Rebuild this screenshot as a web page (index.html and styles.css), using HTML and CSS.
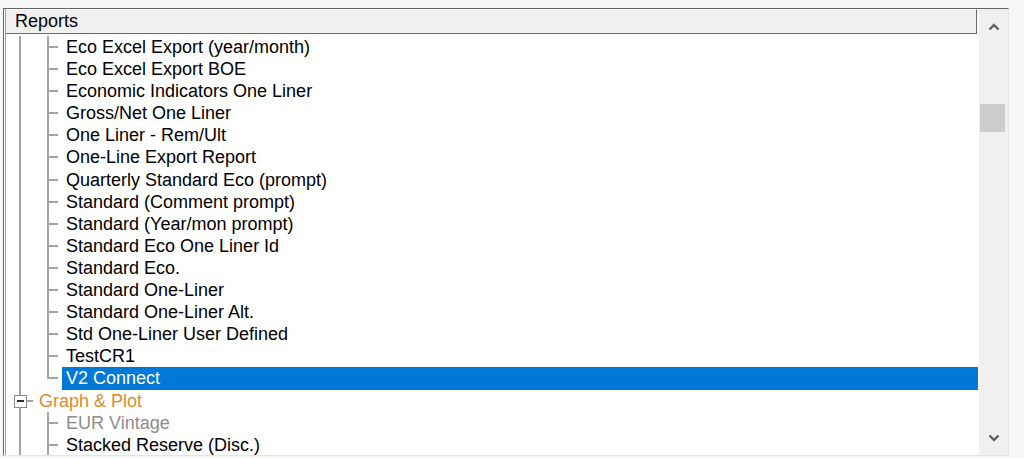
FILE: index.html
```html
<!DOCTYPE HTML>
<html lang="en">
  <head>
    <meta charset="utf-8" />
    <link rel="stylesheet" href="styles.css">
  </head>
  <body>
    <div class="frame">
      <div class="pane">
        <div class="titulo">Reports</div>
        <ul class="arvore">
          <li><span class="g linha"></span><span class="g ramo"></span><span class="nome">Eco Excel Export (year/month)</span></li>
          <li><span class="g linha"></span><span class="g ramo"></span><span class="nome">Eco Excel Export BOE</span></li>
          <li><span class="g linha"></span><span class="g ramo"></span><span class="nome">Economic Indicators One Liner</span></li>
          <li><span class="g linha"></span><span class="g ramo"></span><span class="nome">Gross/Net One Liner</span></li>
          <li><span class="g linha"></span><span class="g ramo"></span><span class="nome">One Liner - Rem/Ult</span></li>
          <li><span class="g linha"></span><span class="g ramo"></span><span class="nome">One-Line Export Report</span></li>
          <li><span class="g linha"></span><span class="g ramo"></span><span class="nome">Quarterly Standard Eco (prompt)</span></li>
          <li><span class="g linha"></span><span class="g ramo"></span><span class="nome">Standard (Comment prompt)</span></li>
          <li><span class="g linha"></span><span class="g ramo"></span><span class="nome">Standard (Year/mon prompt)</span></li>
          <li><span class="g linha"></span><span class="g ramo"></span><span class="nome">Standard Eco One Liner Id</span></li>
          <li><span class="g linha"></span><span class="g ramo"></span><span class="nome">Standard Eco.</span></li>
          <li><span class="g linha"></span><span class="g ramo"></span><span class="nome">Standard One-Liner</span></li>
          <li><span class="g linha"></span><span class="g ramo"></span><span class="nome">Standard One-Liner Alt.</span></li>
          <li><span class="g linha"></span><span class="g ramo"></span><span class="nome">Std One-Liner User Defined</span></li>
          <li><span class="g linha"></span><span class="g ramo"></span><span class="nome">TestCR1</span></li>
          <li class="selecionado"><span class="g linha"></span><span class="g fim"></span><span class="nome">V2 Connect</span></li>
          <li class="grupo"><span class="g linha"><span class="caixa"></span></span><span class="nome">Graph &amp; Plot</span></li>
          <li><span class="g linha"></span><span class="g ramo"></span><span class="nome inativo">EUR Vintage</span></li>
          <li><span class="g linha"></span><span class="g ramo"></span><span class="nome">Stacked Reserve (Disc.)</span></li>
        </ul>
      </div>
      <div class="rolagem">
        <div class="seta">
          <svg width="12" height="8" viewBox="0 0 12 8"><polyline points="1.5,6.5 6,2 10.5,6.5" fill="none" stroke="#606060" stroke-width="2.4"/></svg>
        </div>
        <div class="polegar"></div>
        <div class="seta baixo">
          <svg width="12" height="8" viewBox="0 0 12 8"><polyline points="1.5,1.5 6,6 10.5,1.5" fill="none" stroke="#606060" stroke-width="2.4"/></svg>
        </div>
      </div>
    </div>
  </body>
</html>
```

FILE: styles.css
```css
body {
  margin: 0;
  background-color: #f7f7f7;
  font-family: "Liberation Sans", Arial, sans-serif;
  font-size: 18px;
  color: #000000;
}

.frame {
  display: flex;
  box-sizing: border-box;
  width: 1006px;
  height: 448px;
  margin: 8px 0 0 3px;
  border-top: 1px solid #646464;
  border-left: 1px solid #646464;
  border-right: 1px solid #e4e4e4;
  border-bottom: 1px solid #e4e4e4;
  background-color: #ffffff;
}

.pane {
  flex: 1;
  display: flex;
  flex-direction: column;
  min-width: 0;
  margin-left: 1px;
  border-left: 1px solid #a0a0a0;
  overflow: hidden;
}

.titulo {
  box-sizing: border-box;
  height: 25px;
  margin-right: 1px;
  padding-left: 9px;
  line-height: 23px;
  background-color: #f0f0f0;
  border-top: 1px solid #ffffff;
  border-right: 1px solid #696969;
  border-bottom: 1px solid #696969;
}

ul.arvore {
  list-style-type: none;
  margin: 0;
  padding: 2px 0 0 0;
}
ul.arvore li {
  display: flex;
  height: 22.1px;
  line-height: 22px;
  white-space: nowrap;
}

.g {
  position: relative;
  flex: none;
  width: 27px;
}
.g.ramo, .g.fim {
  width: 29px;
}
.g.linha::before, .g.ramo::before {
  content: '';
  position: absolute;
  left: 13px;
  top: 0;
  bottom: 0;
  width: 2px;
  background-color: #a4a4a4;
}
.g.ramo::before {
  left: 14px;
}
.g.ramo::after, .g.fim::after {
  content: '';
  position: absolute;
  left: 14px;
  top: 10px;
  width: 11px;
  height: 2px;
  background-color: #a4a4a4;
}
.g.fim::before {
  content: '';
  position: absolute;
  left: 14px;
  top: 0;
  height: 12px;
  width: 2px;
  background-color: #a4a4a4;
}

.nome {
  padding: 0 4px;
}
li.selecionado .nome {
  flex: 1;
  color: #ffffff;
  background-color: #0078d7;
}

li.grupo .g::after {
  content: '';
  position: absolute;
  left: 20px;
  top: 10px;
  width: 7px;
  height: 2px;
  background-color: #a4a4a4;
}
li.grupo .nome {
  padding-left: 6px;
  color: #e0892e;
}
.caixa {
  position: absolute;
  left: 8px;
  top: 5px;
  box-sizing: border-box;
  width: 13px;
  height: 13px;
  border: 1px solid #8a8a8a;
  background-color: #ffffff;
  z-index: 1;
}
.caixa::after {
  content: '';
  position: absolute;
  left: 2px;
  top: 4px;
  width: 7px;
  height: 2px;
  background-color: #303030;
}
.nome.inativo {
  color: #8d8d8d;
}

.rolagem {
  flex: none;
  display: flex;
  flex-direction: column;
  width: 29px;
  margin-left: 1px;
  background-color: #f0f0f0;
}
.seta {
  display: flex;
  align-items: center;
  justify-content: center;
  height: 36px;
}
.seta.baixo {
  margin-top: auto;
  height: 34px;
}
.polegar {
  height: 28px;
  margin: 59px 3px 0 1px;
  background-color: #cdcdcd;
}
```
